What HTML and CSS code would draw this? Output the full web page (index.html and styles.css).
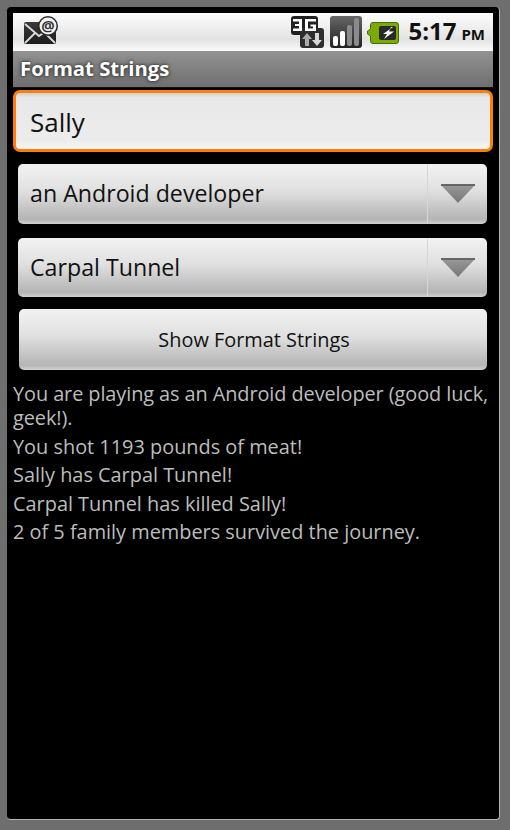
FILE: index.html
```html
<!DOCTYPE html>
<html lang="en">
<head>
	<meta charset="UTF-8">
	<title>Format Strings</title>
	<link rel="stylesheet" href="styles.css">
</head>
<body>
	<div class="frame">
		<div class="screen">
			<div class="status_bar">
				<svg class="mail_icon" width="36" height="30" viewBox="0 0 36 30">
					<defs>
						<linearGradient id="mailFill" x1="0" y1="0" x2="0" y2="1">
							<stop offset="0" stop-color="#3a3a3a"/>
							<stop offset="1" stop-color="#1c1c1c"/>
						</linearGradient>
					</defs>
					<rect x="1" y="6" width="32" height="22" rx="2" fill="url(#mailFill)"/>
					<path d="M2 8 L16 20 L23 15 M2 27 L12 17 M32 27 L22 17" fill="none" stroke="#ddd" stroke-width="1.8"/>
					<circle cx="25" cy="10" r="10" fill="#2a2a2a"/>
					<circle cx="25" cy="10" r="8.5" fill="#f2f2f2"/>
					<text x="25" y="15" class="at_sign">@</text>
				</svg>
				<div class="status_right">
					<svg width="33" height="32" viewBox="0 0 33 32">
						<rect x="0" y="0" width="27" height="19" rx="3" fill="#222"/>
						<rect x="9" y="12" width="24" height="20" rx="3" fill="#2e2e2e"/>
						<path d="M2 3 H11 V15 H2 V12.5 H8 V10 H4 V8 H8 V5.5 H2 Z" fill="#fff"/>
						<path d="M14 3 H25 V5.5 H17 V12.5 H22 V10.5 H19.5 V8.5 H25 V15 H14 Z" fill="#fff"/>
						<path d="M16 17 L21 23 H18 V30 H14 V23 H11 Z" fill="#aaa"/>
						<path d="M26 30 L31 24 H28 V17 H24 V24 H21 Z" fill="#d8d8d8"/>
					</svg>
					<svg class="signal_icon" width="32" height="32" viewBox="0 0 32 32">
						<defs>
							<linearGradient id="signalFill" x1="0" y1="0" x2="0" y2="1">
								<stop offset="0" stop-color="#666"/>
								<stop offset="1" stop-color="#222"/>
							</linearGradient>
						</defs>
						<rect width="32" height="32" rx="3" fill="url(#signalFill)"/>
						<rect x="3" y="20" width="5" height="10" rx="2" fill="#fff"/>
						<rect x="10" y="15" width="5" height="15" rx="2" fill="#fff"/>
						<rect x="17" y="9" width="5" height="21" rx="2" fill="#8a8a8a"/>
						<rect x="24" y="2" width="5" height="28" rx="2" fill="#8a8a8a"/>
					</svg>
					<svg class="battery_icon" width="32" height="24" viewBox="0 0 32 24">
						<path d="M0.5 10 L3.5 8 V4 Q3.5 1.5 6 1.5 H29 Q31.5 1.5 31.5 4 V20 Q31.5 22.5 29 22.5 H6 Q3.5 22.5 3.5 20 V15 L0.5 13 Z" fill="#7aab00" stroke="#4a6a10"/>
						<rect x="12" y="5" width="17" height="14" rx="2" fill="#2a2a2a"/>
						<path d="M26 6 L16 13 H20 L17 18 L27 10.5 H22 L24 6 Z" fill="#fff"/>
					</svg>
					<div class="clock">5:17<span class="am_pm">PM</span></div>
				</div>
			</div>
			<div class="title_bar">Format Strings</div>
			<div class="content">
				<div class="edit_box">Sally</div>
				<div class="spinner">
					<div class="spinner_text">an Android developer</div>
					<div class="spinner_arrow">
						<svg width="34" height="20" viewBox="0 0 34 20">
							<defs>
								<linearGradient id="arrowFill" x1="0" y1="0" x2="0" y2="1">
									<stop offset="0" stop-color="#9a9a9a"/>
									<stop offset="1" stop-color="#777"/>
								</linearGradient>
							</defs>
							<path d="M0 0 H34 V1 L17 19 L0 1 Z" fill="url(#arrowFill)"/>
							<rect width="34" height="2" fill="#666"/>
						</svg>
					</div>
				</div>
				<div class="spinner spinner_second">
					<div class="spinner_text">Carpal Tunnel</div>
					<div class="spinner_arrow">
						<svg width="34" height="20" viewBox="0 0 34 20">
							<path d="M0 0 H34 V1 L17 19 L0 1 Z" fill="url(#arrowFill)"/>
							<rect width="34" height="2" fill="#666"/>
						</svg>
					</div>
				</div>
				<div class="button">Show Format Strings</div>
				<div class="output">
					<div class="output_line output_first">You are playing as an Android developer (good luck, geek!).</div>
					<div class="output_line">You shot 1193 pounds of meat!</div>
					<div class="output_line">Sally has Carpal Tunnel!</div>
					<div class="output_line">Carpal Tunnel has killed Sally!</div>
					<div class="output_line">2 of 5 family members survived the journey.</div>
				</div>
			</div>
		</div>
	</div>
</body>
</html>
```

FILE: styles.css
```css
html, body {
	margin: 0;
	padding: 0;
}
body {
	width: 510px;
	height: 830px;
	overflow: hidden;
	background: #6e6e6e;
	font-family: "Open Sans", "Noto Sans", sans-serif;
}
.frame {
	box-sizing: border-box;
	width: 493px;
	height: 813px;
	margin: 7px 0 0 7px;
	padding: 6px;
	background: #000;
	border-radius: 4px;
	border-bottom: 1px solid #b5b5b5;
	border-right: 1px solid #b5b5b5;
}
.screen {
	width: 480px;
}
.status_bar {
	display: flex;
	justify-content: space-between;
	box-sizing: border-box;
	height: 38px;
	padding: 3px 8px 0 10px;
	background: linear-gradient(#fdfdfd, #e3e3e3 70%, #fafafa);
}
.at_sign {
	font-size: 15px;
	font-weight: bold;
	text-anchor: middle;
	fill: #333;
}
.status_right {
	display: flex;
	align-items: flex-start;
}
.signal_icon {
	margin-left: 6px;
}
.battery_icon {
	margin: 5px 0 0 5px;
}
.clock {
	margin-left: 9px;
	font-size: 24px;
	line-height: 30px;
	font-weight: bold;
	color: #111;
}
.am_pm {
	margin-left: 5px;
	font-size: 15px;
}
.title_bar {
	box-sizing: border-box;
	height: 37px;
	padding-left: 7px;
	border-bottom: 1px solid #111;
	background: linear-gradient(#929292, #6f6f6f);
	color: #fff;
	font-size: 20.3px;
	line-height: 35px;
	font-weight: bold;
	text-shadow: 0 0 4px #222, 0 0 2px #444;
}
.content {
	display: flex;
	flex-direction: column;
}
.edit_box {
	box-sizing: border-box;
	height: 62px;
	margin: 2px 0 0 0;
	padding-left: 14px;
	border: 3px solid #ff8000;
	border-radius: 7px;
	background: linear-gradient(#cfcfcf, #e8e8e8 8%, #ececec 85%, #f6f6f6);
	color: #111;
	font-size: 26px;
	line-height: 58px;
}
.spinner {
	display: flex;
	box-sizing: border-box;
	height: 60px;
	margin: 12px 6px 0 5px;
	border-radius: 5px;
	background: linear-gradient(#f2f2f2, #e0e0e0 45%, #b4b4b4 92%, #d0d0d0);
	color: #111;
}
.spinner_second {
	margin-top: 14px;
	height: 59px;
}
.spinner_text {
	flex: 1;
	padding-left: 12px;
	font-size: 23.2px;
	line-height: 58px;
}
.spinner_arrow {
	display: flex;
	align-items: center;
	justify-content: center;
	width: 59px;
	border-left: 1px solid #d6d6d6;
}
.button {
	height: 61px;
	margin: 12px 6px 0 6px;
	padding-left: 2px;
	border-radius: 5px;
	background: linear-gradient(#f2f2f2, #e0e0e0 45%, #b4b4b4 92%, #d0d0d0);
	color: #111;
	font-size: 19.9px;
	line-height: 62px;
	text-align: center;
}
.output {
	margin-top: 12px;
	color: #bdbdbd;
	font-size: 19.9px;
}
.output_line {
	margin-bottom: 4.5px;
	line-height: 24px;
}
.output_first {
	letter-spacing: -0.08px;
}
```
